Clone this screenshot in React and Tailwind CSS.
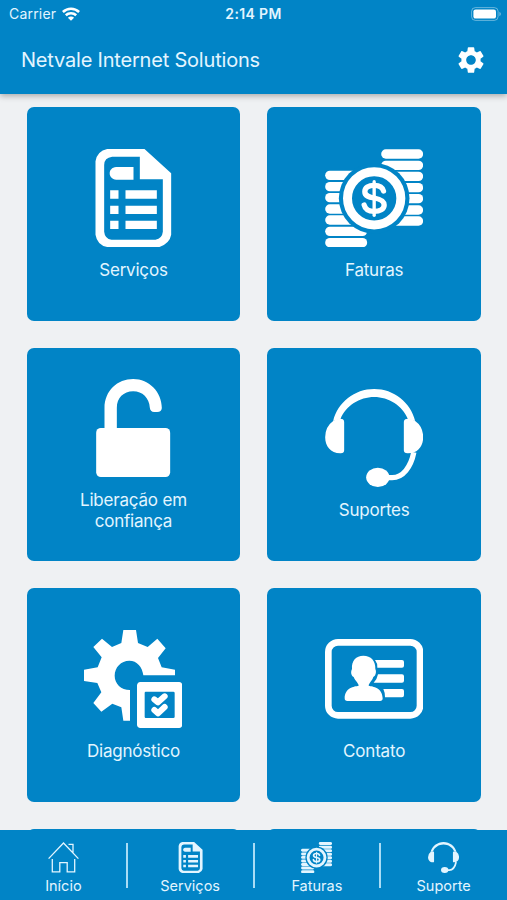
import React from 'react';
import { MdSettings } from 'react-icons/md';

const DocumentIcon = ({ className }) => (
  <svg className={className} viewBox="13.5 40 294 294" fill="currentColor">
    <path
      fillRule="evenodd"
      d="M83 40H195L275 113V297Q271 322 240 334H83Q53 328 48 297V77Q53 46 83 40ZM98 63Q74 66 74 88V288Q76 309 96 312H228Q248 308 250 288V131H181V63Z"
    />
    <path d="M110 94H162V132H110C84 130 84 96 110 94Z" />
    <path d="M92 164h25v25h-25zM138 164h94v25h-94zM92 210h25v25h-25zM138 210h94v25h-94zM92 255h25v25h-25zM138 255h94v25h-94z" />
  </svg>
);

const CoinsIcon = ({ className }) => (
  <svg className={className} viewBox="46.5 40 294 294" fill="currentColor">
    {[41, 75, 108, 142, 175, 209, 242].map((y) => (
      <rect key={y} x="215" y={y} width="126" height="28" rx="14" />
    ))}
    {[105, 139, 172, 206, 239, 273, 307].map((y) => (
      <rect key={y} x="47" y={y} width="126" height="28" rx="14" />
    ))}
    <circle cx="194" cy="188" r="106" className="fill-[#0184c6]" />
    <circle cx="194" cy="188" r="80" fill="none" stroke="currentColor" strokeWidth="27" />
    <path
      d="M222 166C219 153 209 149 194 149C177 149 166 156 166 168C166 181 178 184 194 187C211 190 224 195 224 208C224 221 211 227 194 227C177 227 167 221 164 208"
      fill="none"
      stroke="currentColor"
      strokeWidth="16"
      strokeLinecap="round"
    />
    <path d="M194 138V239" fill="none" stroke="currentColor" strokeWidth="10" strokeLinecap="round" />
  </svg>
);

const UnlockIcon = ({ className }) => (
  <svg className={className} viewBox="43.5 27 294 294" fill="currentColor">
    <rect x="80" y="174" width="222" height="147" rx="14" />
    <path d="M105 180V114C105 62 144 27 191 27C239 27 277 66 277 114Q276 126 263 126H254Q242 125 241 113C239 84 219 64 191 64C162 64 142 84 142 114V180Z" />
  </svg>
);

const HeadsetIcon = ({ className }) => (
  <svg className={className} viewBox="46.5 42 294 294" fill="currentColor">
    <path d="M71 138C85 82 135 42 194 42C253 42 303 82 317 138L295 132C279 92 238 66 194 66C150 66 109 92 93 132Z" />
    <path d="M71 138Q84 130 97 132Q104 133 104 142V226Q104 235 94 235C64 236 47 214 47 187Q47 155 71 138Z" />
    <path d="M317 138Q304 130 291 132Q283 133 283 142V226Q283 235 294 235C324 236 341 214 341 187Q341 155 317 138Z" />
    <path d="M313 232C304 277 280 308 248 308H232" fill="none" stroke="currentColor" strokeWidth="16" />
    <ellipse cx="205" cy="307" rx="35" ry="29" />
  </svg>
);

const DiagnosticIcon = ({ className }) => (
  <svg className={className} viewBox="44 30 294 294" fill="currentColor">
    <path d="M162 30H200L206 69L235 81L264 56L289 85L266 114L277 142L317 149V166H222C219 141 203 122 180 122C155 122 136 142 136 167C136 191 155 210 182 210V302H162L156 262L129 251L96 275L72 249L96 217L84 189L44 183V149L85 142L97 112L72 81L98 56L128 81L156 69Z" />
    <path
      fillRule="evenodd"
      d="M213 186H330Q339 187 339 196V315Q338 323 330 324H213Q204 323 203 315V196Q204 187 213 186ZM229 215Q226 215 226 219V290Q226 294 229 294H312Q316 294 316 290V219Q316 215 312 215Z"
    />
    <path
      d="M255 238L266 247L286 229M255 270L266 280L286 261"
      fill="none"
      stroke="currentColor"
      strokeWidth="18"
      strokeLinecap="round"
      strokeLinejoin="round"
    />
  </svg>
);

const ContactIcon = ({ className }) => (
  <svg className={className} viewBox="46 30 294 294" fill="currentColor">
    <rect x="56" y="67" width="275" height="219" rx="29" fill="none" stroke="currentColor" strokeWidth="20" />
    <path d="M196 120H277Q283 120 283 126V137Q283 143 277 143H203Q204 130 196 120Z" />
    <path d="M205 163H277Q283 163 283 169V182Q283 188 277 188H192Q202 179 205 163Z" />
    <path d="M221 207H277Q283 207 283 213V226Q283 232 277 232H226Q226 217 221 207Z" />
    <path d="M161 107C184 107 198 122 197 147C202 158 196 169 191 171C187 184 178 188 177 197C190 200 218 202 219 235Q219 243 211 243H113Q105 243 105 235C106 202 133 200 147 197C146 188 137 184 132 171C125 167 122 157 127 147C125 122 139 107 161 107Z" />
  </svg>
);

const HomeIcon = ({ className }) => (
  <svg className={className} viewBox="0 0 31 31" fill="none" stroke="currentColor" strokeWidth="1.3">
    <path d="M.6 16.6L15.5 1L30.4 16.6M20.5 2.3H25V10.6M4.3 17V29.8H11.8V20.6H19.2V29.8H26.7V17" />
  </svg>
);

const WifiIcon = ({ className }) => (
  <svg className={className} viewBox="0 0 18 14" fill="none" stroke="currentColor" strokeWidth="2.6">
    <path d="M.9 5C5.5 .7 12.5 .7 17.1 5" />
    <path d="M3.8 8.2C6.7 5.5 11.3 5.5 14.2 8.2" />
    <path d="M9 13.8L5.9 10.7C7.7 9.1 10.3 9.1 12.1 10.7Z" fill="currentColor" stroke="none" />
  </svg>
);

const BatteryIcon = ({ className }) => (
  <svg className={className} viewBox="0 0 30 14" fill="currentColor">
    <rect x=".6" y=".6" width="26.5" height="12.8" rx="3.8" fill="none" stroke="currentColor" strokeOpacity=".4" />
    <rect x="2.4" y="2.4" width="22.6" height="9.2" rx="2.2" />
    <path d="M28.3 4.8Q30 5.8 30 7T28.3 9.2Z" opacity=".4" />
  </svg>
);

const cards = [
  { label: 'Serviços', Icon: DocumentIcon },
  { label: 'Faturas', Icon: CoinsIcon },
  { label: 'Liberação em confiança', Icon: UnlockIcon },
  { label: 'Suportes', Icon: HeadsetIcon },
  { label: 'Diagnóstico', Icon: DiagnosticIcon },
  { label: 'Contato', Icon: ContactIcon },
];

const tabs = [
  { label: 'Início', Icon: HomeIcon },
  { label: 'Serviços', Icon: DocumentIcon },
  { label: 'Faturas', Icon: CoinsIcon },
  { label: 'Suporte', Icon: HeadsetIcon },
];

const App = () => {
  return (
    <div className="flex h-screen flex-col overflow-hidden bg-[#eff1f3] font-['Inter',sans-serif] text-white">
      <header className="z-10 h-[94px] shrink-0 bg-[#0184c6] shadow-[0_2px_6px_rgba(0,0,0,0.3)]">
        <div className="grid h-[27px] grid-cols-3 items-center pl-[9px] pr-[6px] text-[14px] text-[#e3f5ff]">
          <div className="flex items-center gap-1.5">
            <span className="tracking-[0.2px]">Carrier</span>
            <WifiIcon className="h-3.5 w-[18px] text-white" />
          </div>
          <span className="-ml-[3px] text-center font-semibold tracking-[0.35px]">2:14 PM</span>
          <BatteryIcon className="h-3.5 w-[30px] justify-self-end text-white" />
        </div>
        <div className="flex h-[66px] items-center justify-between pl-[21px] pr-5">
          <h1 className="text-[20px] tracking-[-0.2px] text-[#e3f5ff]">Netvale Internet Solutions</h1>
          <MdSettings className="h-8 w-8" />
        </div>
      </header>

      <main className="min-h-0 flex-1 overflow-hidden pl-[26.6px] pr-[26px] pt-[13.4px]">
        <div className="grid grid-cols-2 gap-[27px]">
          {cards.map(({ label, Icon }) => (
            <div key={label} className="flex h-[213.5px] flex-col items-center justify-center gap-3 rounded-[7px] bg-[#0184c6]">
              <Icon className="h-[98px] w-[98px]" />
              <p className="-mb-px mt-px w-[130px] text-center text-[17px] leading-[21px] tracking-[-0.2px] text-[#e3f5ff]">{label}</p>
            </div>
          ))}
          <div className="h-[213.5px] rounded-[7px] bg-[#0184c6]" />
          <div className="h-[213.5px] rounded-[7px] bg-[#0184c6]" />
        </div>
      </main>

      <nav className="flex h-[70px] shrink-0 items-center bg-[#0184c6]">
        {tabs.map(({ label, Icon }, index) => (
          <React.Fragment key={label}>
            {index > 0 && <div className="-mx-px h-[45px] w-0.5 bg-[#a9dcf5]" />}
            <div className="flex flex-1 flex-col items-center gap-1 pt-[7px] text-[#e3f5ff]">
              <Icon className="h-[31px] w-[31px]" />
              <span className="text-[14.5px] leading-[18px]">{label}</span>
            </div>
          </React.Fragment>
        ))}
      </nav>
    </div>
  );
};

export default App;
